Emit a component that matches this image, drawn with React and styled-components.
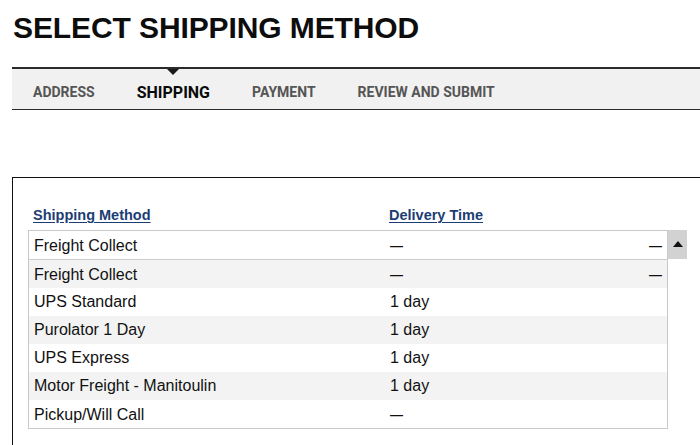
import React from "react";
import styled, { createGlobalStyle } from "styled-components";

const GlobalSt = createGlobalStyle`
  html, body {
    margin: 0;
    padding: 0;
    background: #fff;
    overflow: hidden;
  }
  body {
    font-family: "Liberation Sans", Arial, sans-serif;
    color: #111;
  }
`;

const PageSt = styled.div`
  width: 700px;
  padding-top: 13px;
`;

const TitleSt = styled.h1`
  margin: 0;
  padding-left: 13px;
  font-size: 30px;
  line-height: 30px;
  font-weight: 700;
  color: #0d0d0d;
  letter-spacing: -0.1px;
`;

const TabBarSt = styled.nav`
  margin: 24px 0 0 12px;
  height: 40px;
  display: flex;
  gap: 42px;
  padding-left: 21px;
  background: #f1f1f1;
  border-top: 2px solid #2b2b2b;
  border-bottom: 1px solid #2b2b2b;
`;

const TabSt = styled.div`
  position: relative;
  display: flex;
  align-items: center;
  padding-top: 6px;
  font-family: Roboto, "Liberation Sans", Arial, sans-serif;
  font-weight: 700;
  font-size: ${(p) => (p.$active ? "16px" : "14px")};
  color: ${(p) => (p.$active ? "#0a0a0a" : "#555")};

  &::before {
    content: "";
    display: ${(p) => (p.$active ? "block" : "none")};
    position: absolute;
    top: 0;
    left: 50%;
    transform: translateX(-50%);
    border-left: 6px solid transparent;
    border-right: 6px solid transparent;
    border-top: 6px solid #1a1a1a;
  }
`;

const BoxSt = styled.section`
  margin: 67px 0 0 12px;
  padding: 28px 32px 40px 15px;
  border-top: 1px solid #111;
  border-left: 1px solid #111;
`;

const HeaderSt = styled.div`
  display: grid;
  grid-template-columns: 356px 1fr;
  padding: 0 5px;
  margin-bottom: 6px;
  line-height: 18px;
`;

const HeadLinkSt = styled.a`
  justify-self: start;
  font-size: 14.5px;
  font-weight: 700;
  color: #1c3d74;
  text-decoration: underline;
  text-underline-offset: 2px;
  cursor: pointer;
`;

const ListSt = styled.div`
  position: relative;
  border: 1px solid #c9c9c9;
`;

const RowSt = styled.div`
  display: grid;
  grid-template-columns: 356px 1fr auto;
  align-items: center;
  height: 28px;
  padding: 0 5px;
  font-size: 16px;
  line-height: 28px;
  color: #111;
  background: ${(p) => (p.$shade ? "#f3f3f3" : "#fff")};
  border-bottom: ${(p) => (p.$first ? "1px solid #cdcdcd" : "none")};
`;

const DashSt = styled.span`
  font-size: 13px;
  font-weight: 700;
`;

const ScrollUpSt = styled.div`
  position: absolute;
  top: -1px;
  left: calc(100% + 1px);
  width: 19px;
  height: 29px;
  background: #d2d2d2;
  display: flex;
  align-items: center;
  justify-content: center;

  &::after {
    content: "";
    border-left: 5px solid transparent;
    border-right: 5px solid transparent;
    border-bottom: 6px solid #111;
    margin-top: -2px;
  }
`;

const tabs = [
  { label: "ADDRESS" },
  { label: "SHIPPING", active: true },
  { label: "PAYMENT" },
  { label: "REVIEW AND SUBMIT" },
];

const methods = [
  { name: "Freight Collect", time: "—", extra: "—" },
  { name: "Freight Collect", time: "—", extra: "—" },
  { name: "UPS Standard", time: "1 day" },
  { name: "Purolator 1 Day", time: "1 day" },
  { name: "UPS Express", time: "1 day" },
  { name: "Motor Freight - Manitoulin", time: "1 day" },
  { name: "Pickup/Will Call", time: "—" },
];

const renderValue = (v) => (v === "—" ? <DashSt>—</DashSt> : v);

export default function App() {
  return (
    <PageSt>
      <GlobalSt />
      <TitleSt>SELECT SHIPPING METHOD</TitleSt>

      <TabBarSt>
        {tabs.map((t) => (
          <TabSt key={t.label} $active={t.active}>
            {t.label}
          </TabSt>
        ))}
      </TabBarSt>

      <BoxSt>
        <HeaderSt>
          <HeadLinkSt>Shipping Method</HeadLinkSt>
          <HeadLinkSt>Delivery Time</HeadLinkSt>
        </HeaderSt>

        <ListSt>
          {methods.map((m, i) => (
            <RowSt key={i} $first={i === 0} $shade={i % 2 === 1}>
              <span>{m.name}</span>
              <span>{renderValue(m.time)}</span>
              <span>{m.extra ? renderValue(m.extra) : null}</span>
            </RowSt>
          ))}
          <ScrollUpSt />
        </ListSt>
      </BoxSt>
    </PageSt>
  );
}
